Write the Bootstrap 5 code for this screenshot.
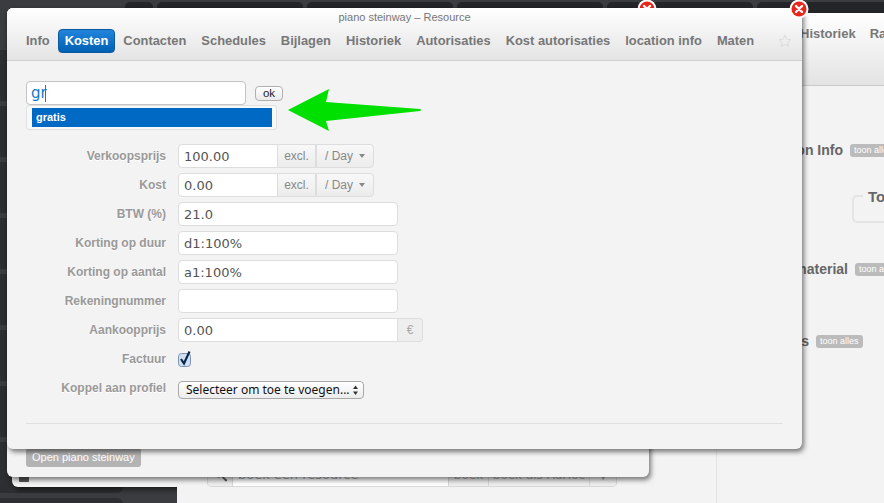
<!DOCTYPE html>
<html lang="nl">
<head>
<meta charset="utf-8">
<title>piano steinway – Resource</title>
<link href="https://cdn.jsdelivr.net/npm/bootstrap@5.3.0/dist/css/bootstrap.min.css" rel="stylesheet">
<style>
html,body{margin:0;height:100%;overflow:hidden;background:#3b3c3f;font-family:"Liberation Sans",Arial,sans-serif}
.desk{position:relative;width:884px;height:503px;overflow:hidden}
.toptiles{height:12px;padding:2px 0 0 125px;gap:4px}
.toptiles i{display:block;flex:0 0 146px;height:30px;background:#242528;border-radius:5px}
.toptiles i:first-child{flex-basis:28px}
.sidetiles{position:absolute;left:-10px;top:50px;width:133px;gap:5px}
.sidetiles i{display:block;height:51px;background:#2d2e31;border-radius:6px}
.win{position:absolute;background:#f3f3f3;box-shadow:2px 3px 5px rgba(0,0,0,.5)}
.closer{position:absolute;top:-9px;width:20px;height:20px}
/* rear page */
.pageleft{left:12px;top:13px;width:170px;height:474px;border-radius:6px}
.pageleft b{position:absolute;left:7px;bottom:5px;width:10px;height:9px;background:#555;border-radius:1px}
.pagemain{left:177px;top:13px;width:707px;height:490px;box-shadow:none}
.pagehead{height:73px;flex:none;background:linear-gradient(#fff,#e3e3e3);border-bottom:1px solid #ccc;padding:13px 0 0 623px;gap:14px;font:bold 13px "Liberation Sans",sans-serif;color:#777;white-space:nowrap}
.pagebody{flex:1;min-height:0}
.leftpane{width:540px;border-right:1px solid #e3e3e3;padding:0 0 16px 30px}
.rightpane{flex:1;overflow:hidden;padding:0 0 0 12px;position:relative}
.searchbar{height:24px;width:410px;border:1px solid #d8d8d8;border-radius:4px;font:13px "DejaVu Sans",sans-serif;color:#aaa;overflow:hidden}
.searchbar span{display:block;border-left:1px solid #d8d8d8;background:#eee;font-size:12px;line-height:22px;text-align:center;white-space:nowrap}
.searchbar span:first-child{width:24px;border:0}
.searchbar em{flex:1;background:#fff;border-left:1px solid #d8d8d8;font-style:normal;line-height:22px;padding-left:5px;white-space:nowrap}
.hdrow{gap:7px;white-space:nowrap;font:bold 14px/16px "Liberation Sans",sans-serif;color:#666}
.hdtext{flex:0 0 114px;text-align:right}
.toon{flex:none;background:#bbb;color:#fff;font:9px/13px "Liberation Sans",sans-serif;border-radius:3px;padding:0 4px}
.hdr1{margin-top:56px}
.box{width:120px;height:28px;border:2px solid #e4e4e4;border-radius:5px;margin:37px 0 0 123px;position:relative}
.box span{position:absolute;left:9px;top:-9px;background:#f3f3f3;padding:0 5px;font:bold 15px/18px "Liberation Sans",sans-serif;color:#666}
.hdr2{margin-top:38px;gap:7px}
.hdr2 .hdtext{flex-basis:119px}
.hdr3{margin-top:56px}
.hdr3 .hdtext{flex-basis:80px}
/* middle */
.midwin{left:7px;top:8px;width:642px;height:469px;border-radius:6px;background:#f3f3f3}
.openbtn{align-self:flex-start;margin:auto 0 10px 19px;background:#b3b3b3;color:#fff;font-size:11px;line-height:19px;padding:0 6px;border-radius:3px;border:0}
/* main */
.mainwin{left:7px;top:8px;width:795px;height:441px;border-radius:6px}
.mainhead{height:53px;background:linear-gradient(#fff,#e4e4e4);border-bottom:1px solid #cfcfcf;border-radius:6px 6px 0 0}
.wintitle{font-size:11px;line-height:12px;padding-top:3px;color:#777;text-align:center}
.tabbar{padding:6px 10px 0 12px}
.tabbar .nav{gap:1px;flex-wrap:nowrap;white-space:nowrap}
.tabbar .nav-link{font-size:12.9px;font-weight:700;line-height:22px;padding:0 6px;color:#777;border:1px solid transparent;border-radius:4px}
.tabbar .nav-pills .nav-link.active{color:#fff;background:linear-gradient(#2184dc,#0160b2);border-color:#0a5aa0}
.mainbody{padding:20px 19px 0}
.typer{position:relative;width:220px}
.typer .form-control{height:24px;padding:0 4px;font:15px "DejaVu Sans",sans-serif;color:#1678c8;border:1px solid #c4c4c4;border-radius:4px}
.caret-mark{position:absolute;left:19px;top:4px;width:1px;height:17px;background:#1678c8}
.okbtn{margin-left:9px;height:15px;width:28px;padding:0;font:11.5px/13px "Liberation Sans",sans-serif;color:#222;background:linear-gradient(#fff,#eaeaea);border:1px solid #b0b0b0;border-radius:4px}
.suggest{width:251px;height:25px;background:#f8f8f8;border:1px solid #e0e0e0;border-radius:3px;padding:2px 4px 2px 5px}
.suggest div{background:#0069c4;color:#fff;font-size:11px;line-height:19px;padding-left:4px;font-weight:700}
.arrow{position:absolute;left:281px;top:81px;width:136px;height:42px}
.formrows{margin-top:14px}
.frow{height:24px;margin-bottom:5px}
.flabel{flex:0 0 140px;margin-right:12px;text-align:right;font-size:12px;font-weight:700;color:#999;white-space:nowrap;text-shadow:0 1px 0 #fff}
.fi{height:24px;width:220px;padding:0 5px;font:13px "DejaVu Sans",sans-serif;color:#555;background:#fff;border:1px solid #ddd;border-radius:4px;flex:none}
.fi.narrow{width:100px;border-radius:4px 0 0 4px}
.fi.joined{border-radius:4px 0 0 4px}
.addon{height:24px;line-height:22px;border:1px solid #ddd;border-left:0;background:linear-gradient(#f8f8f8,#ececec);font-size:12px;color:#888;text-align:center;flex:none}
.excl{width:38px}
.perday{width:58px;border-radius:0 4px 4px 0;border-left:1px solid #ddd;margin-left:0;padding:0;box-shadow:none}
.perday::after{display:inline-block;content:"";margin-left:6px;vertical-align:2px;border-top:4px solid #888;border-left:3.5px solid transparent;border-right:3.5px solid transparent}
.euro{width:25px;background:#eee;border-radius:0 4px 4px 0;color:#aaa}
.factrow{height:24px;margin-bottom:5px;padding-top:0}
.selrow{height:18px;margin-top:10px}
.selrow .flabel{margin-top:-4px}
.selector{width:186px;height:18px;padding:0 0 0 7px;font:12px/16px "Noto Sans",sans-serif;color:#111;border:1px solid #a9a9a9;border-radius:4px;background:url("data:image/svg+xml,%3Csvg xmlns='http://www.w3.org/2000/svg' width='186' height='16'%3E%3Cpath d='M174 7l2.500-3.500L179 7zM174 9.500l2.500 3.500 2.500-3.500z' fill='%23333'/%3E%3C/svg%3E") no-repeat 0 0,linear-gradient(#fff,#ececec);white-space:nowrap;overflow:hidden}
.rule{margin:24px 0 0;border-top:1px solid #e0e0e0;opacity:1}
</style>
</head>
<body>
<div class="desk">
  <div class="toptiles d-flex"><i></i><i></i><i></i><i></i><i></i><i></i></div>
  <div class="sidetiles d-flex flex-column"><i></i><i></i><i></i><i></i><i></i><i></i><i></i><i></i><i></i></div>

  <div class="win pageleft"><b></b></div>
  <div class="win pagemain d-flex flex-column">
    <div class="pagehead d-flex"><span>Historiek</span><span>Rapporten</span></div>
    <div class="pagebody d-flex">
      <div class="leftpane d-flex flex-column justify-content-end">
        <div class="searchbar d-flex">
          <span>&#128269;</span><em>boek een resource</em><span style="width:40px">boek</span><span style="width:101px">boek als AdHoc</span><span style="width:27px">&#9660;</span>
        </div>
      </div>
      <div class="rightpane">
        <div class="hdrow hdr1 d-flex align-items-center"><span class="hdtext">Location Info</span><span class="toon">toon alles</span></div>
        <div class="box"><span>Totaal</span></div>
        <div class="hdrow hdr2 d-flex align-items-center"><span class="hdtext">Extra material</span><span class="toon">toon alles</span></div>
        <div class="hdrow hdr3 d-flex align-items-center"><span class="hdtext">Contacts</span><span class="toon">toon alles</span></div>
      </div>
    </div>
  </div>

  <div class="win midwin d-flex flex-column">
    <svg class="closer" style="right:-8px" viewBox="0 0 20 20"><circle cx="10" cy="10" r="9.500" fill="#fff"/><circle cx="10" cy="10" r="7.500" fill="#e8261c"/><path d="M7 7l6 6M13 7l-6 6" stroke="#fff" stroke-width="2.400" stroke-linecap="round"/></svg>
    <button type="button" class="btn openbtn">Open piano steinway</button>
  </div>

  <div class="win mainwin">
    <svg class="closer" style="right:-7px;z-index:2" viewBox="0 0 20 20"><circle cx="10" cy="10" r="9.500" fill="#fff"/><circle cx="10" cy="10" r="7.500" fill="#e8261c"/><path d="M7 7l6 6M13 7l-6 6" stroke="#fff" stroke-width="2.400" stroke-linecap="round"/></svg>
    <div class="mainhead">
      <div class="wintitle">piano steinway – Resource</div>
      <div class="tabbar d-flex align-items-center">
        <ul class="nav nav-pills">
          <li class="nav-item"><a class="nav-link" href="#">Info</a></li>
          <li class="nav-item"><a class="nav-link active" href="#">Kosten</a></li>
          <li class="nav-item"><a class="nav-link" href="#">Contacten</a></li>
          <li class="nav-item"><a class="nav-link" href="#">Schedules</a></li>
          <li class="nav-item"><a class="nav-link" href="#">Bijlagen</a></li>
          <li class="nav-item"><a class="nav-link" href="#">Historiek</a></li>
          <li class="nav-item"><a class="nav-link" href="#">Autorisaties</a></li>
          <li class="nav-item"><a class="nav-link" href="#">Kost autorisaties</a></li>
          <li class="nav-item"><a class="nav-link" href="#">location info</a></li>
          <li class="nav-item"><a class="nav-link" href="#">Maten</a></li>
        </ul>
        <svg class="ms-auto" width="14" height="14" viewBox="0 0 14 14"><path d="M7 1l1.700 4.200 4.300.3-3.300 2.800 1.100 4.400L7 10.300l-3.800 2.400 1.100-4.400L1 5.500l4.300-.3z" fill="none" stroke="#dcdcdc"/></svg>
      </div>
    </div>
    <div class="mainbody">
      <div class="d-flex align-items-center">
        <div class="typer"><input class="form-control" type="text" value="gr" aria-label="Zoek"><span class="caret-mark"></span></div>
        <button type="button" class="btn okbtn">ok</button>
      </div>
      <div class="suggest"><div>gratis</div></div>
      <svg class="arrow" viewBox="0 0 136 42"><path d="M0 21L41 0l-3 13 94 7q2 1 0 2l-94 10 3 10z" fill="#00e000"/></svg>

      <div class="formrows">
        <div class="frow d-flex align-items-center"><label class="flabel">Verkoopsprijs</label><input class="fi narrow" value="100.00"><div class="addon excl">excl.</div><button type="button" class="btn addon perday">/ Day</button></div>
        <div class="frow d-flex align-items-center"><label class="flabel">Kost</label><input class="fi narrow" value="0.00"><div class="addon excl">excl.</div><button type="button" class="btn addon perday">/ Day</button></div>
        <div class="frow d-flex align-items-center"><label class="flabel">BTW (%)</label><input class="fi" value="21.0"></div>
        <div class="frow d-flex align-items-center"><label class="flabel">Korting op duur</label><input class="fi" value="d1:100%"></div>
        <div class="frow d-flex align-items-center"><label class="flabel">Korting op aantal</label><input class="fi" value="a1:100%"></div>
        <div class="frow d-flex align-items-center"><label class="flabel">Rekeningnummer</label><input class="fi" value=""></div>
        <div class="frow d-flex align-items-center"><label class="flabel">Aankoopprijs</label><input class="fi joined" value="0.00"><div class="addon euro">€</div></div>
        <div class="factrow d-flex align-items-center"><label class="flabel">Factuur</label>
          <svg width="16" height="18" viewBox="0 0 16 18"><rect x=".5" y="3.500" width="12" height="13" rx="3" fill="#cfe0f6" stroke="#7f93ad"/><path d="M3 9l3 4.500L11.500 1.500" fill="none" stroke="#0d2748" stroke-width="2.200"/></svg>
        </div>
        <div class="selrow d-flex align-items-center"><label class="flabel">Koppel aan profiel</label><div class="selector" role="combobox">Selecteer om toe te voegen...</div></div>
      </div>
      <hr class="rule">
    </div>
  </div>
</div>
</body>
</html>
